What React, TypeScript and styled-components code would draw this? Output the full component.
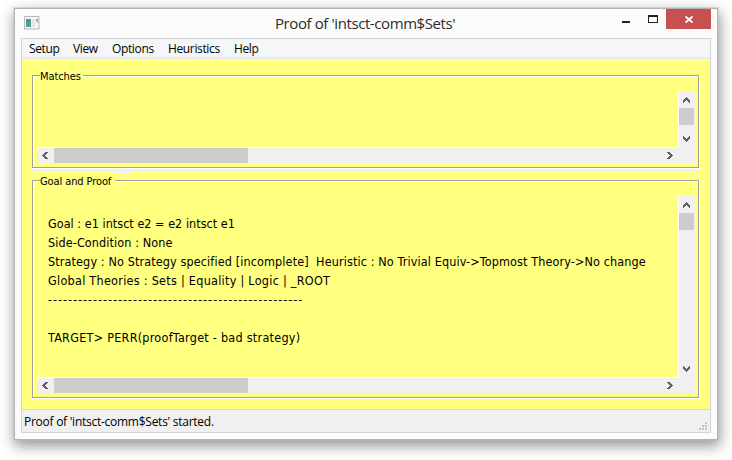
import React from "react";
import styled, { createGlobalStyle } from "styled-components";

const GlobalStyle = createGlobalStyle`
  * { box-sizing: border-box; }
  body { margin: 0; background: #fff; overflow: hidden; }
`;

const Desktop = styled.div`
  width: 732px;
  height: 460px;
  padding: 8px 0 0 14px;
  background: #fff;
`;

const WindowFrame = styled.section`
  width: 704px;
  height: 432px;
  display: flex;
  flex-direction: column;
  padding: 0 6px 6px;
  border: 1px solid #b4b4b4;
  background: #fbfbfb;
  box-shadow: 0 0 0 1px rgba(190, 190, 190, 0.45), 1px 5px 13px 1px rgba(0, 0, 0, 0.42);
`;

const TitleBar = styled.header`
  display: grid;
  grid-template-columns: 245px 1fr auto;
  height: 29px;
`;

const AppIcon = styled.svg`
  display: block;
  margin: 7px 0 0 3px;
`;

const Title = styled.h1`
  margin: 0;
  padding-left: 9px;
  font: 400 15px/29px "Open Sans", "Noto Sans", sans-serif;
  letter-spacing: -0.41px;
  white-space: pre;
  color: #2b2b2b;
`;

const WindowButtons = styled.div`
  display: flex;
  height: 20px;
`;

const WindowButton = styled.button<{ $width: number; $danger?: boolean }>`
  width: ${(p) => p.$width}px;
  height: 20px;
  padding: 0;
  border: 0;
  background: ${(p) => (p.$danger ? "#c75050" : "transparent")};
  svg { display: block; }
`;

const Client = styled.div`
  flex: 1;
  display: flex;
  flex-direction: column;
  border: 1px solid #d2d3d5;
  background: #ffff80;
`;

const MenuBar = styled.nav`
  display: flex;
  height: 20px;
  padding-left: 7px;
  border-bottom: 2px solid #e8e9eb;
  background: #f5f6f7;
`;

const MenuItem = styled.span<{ $width: number }>`
  width: ${(p) => p.$width}px;
  font: 12px/20px "Open Sans", "Noto Sans", sans-serif;
  letter-spacing: -0.36px;
  white-space: pre;
  color: #000;
`;

const Panels = styled.main`
  flex: 1;
  padding: 10px 10px 0;
`;

const Group = styled.section<{ $height: number }>`
  height: ${(p) => p.$height}px;
  width: 667px;
  display: flex;
  flex-direction: column;
`;

/* The legend row draws the etched top edge on both sides of its text. */
const Legend = styled.div`
  display: flex;
  height: 12px;
  &::before,
  &::after {
    content: "";
    margin-top: 6px;
    height: 6px;
    border-top: 1px solid #a0a0a0;
    box-shadow: inset 0 1px #fff;
  }
  &::before {
    width: 7px;
    border-left: 1px solid #a0a0a0;
    box-shadow: inset 1px 1px #fff;
  }
  &::after {
    flex: 1;
    border-right: 1px solid #a0a0a0;
    box-shadow: inset 0 1px #fff, 1px 0 #fff;
  }
`;

const LegendText = styled.span<{ $width: number }>`
  width: ${(p) => p.$width}px;
  font: 11px/15px "DejaVu Sans Condensed", "DejaVu Sans", sans-serif;
  font-stretch: condensed;
  letter-spacing: -0.1px;
  white-space: pre;
  color: #000;
`;

const GroupBody = styled.div`
  flex: 1;
  display: grid;
  grid-template-columns: 641px 17px;
  grid-template-rows: 1fr 17px;
  padding: 10px 3px 3px 4px;
  border: 1px solid #a0a0a0;
  border-top: 0;
  box-shadow: inset 1px 0 #fff, 1px 0 #fff, 1px 1px #fff, 0 1px #fff;
`;

const Content = styled.div`
  min-width: 0;
  padding: 18px 0 0 11px;
  overflow: hidden;
`;

const Line = styled.p<{ $tracking: number }>`
  margin: 0;
  height: 19px;
  font: 12.5px/19px "DejaVu Sans Condensed", "DejaVu Sans", sans-serif;
  font-stretch: condensed;
  letter-spacing: ${(p) => p.$tracking}px;
  white-space: pre;
  color: #000;
`;

const VScroll = styled.div`
  display: flex;
  flex-direction: column;
  width: 17px;
  border-left: 1px solid #fff;
  background: #f0f0f0;
  svg { display: block; flex: none; }
`;

const HScroll = styled.div`
  grid-column: 1 / 3;
  display: flex;
  height: 17px;
  padding-right: 17px;
  background: linear-gradient(90deg, #fff 641px, #f0f0f0 641px) top / 100% 1px no-repeat #f0f0f0;
  svg { display: block; flex: none; margin-top: 1px; }
`;

const Thumb = styled.div<{ $w: number; $h: number }>`
  width: ${(p) => p.$w}px;
  height: ${(p) => p.$h}px;
  flex: none;
  background: #cdcdcd;
`;

const VThumb = styled(Thumb)`
  margin-top: 1px;
`;

const HThumb = styled(Thumb)`
  margin: 1px 0 0 1px;
`;

const Track = styled.div`
  flex: 1;
`;

const Splitter = styled.div`
  width: 668px;
  height: 5px;
  margin-top: 1px;
  border-top: 3px solid #f0f0f0;
  &::after {
    content: "";
    display: block;
    width: 17px;
    height: 2px;
    margin-left: 82px;
    background: #f0f0f0;
  }
`;

const StatusBar = styled.footer`
  display: flex;
  justify-content: space-between;
  height: 23px;
  padding-left: 2px;
  border-top: 1px solid #d7d7d7;
  background: #f0f0f0;
`;

const StatusText = styled.span`
  font: 12px/24px "Open Sans", "Noto Sans", sans-serif;
  letter-spacing: -0.26px;
  white-space: pre;
`;

const Grip = styled.svg`
  display: block;
  margin: 12px 2px 0 0;
`;

type Direction = "up" | "down" | "left" | "right";

const chevrons: Record<Direction, string> = {
  up: "M7 6h1v1h1v1h1v1h1v3h-1v-1h-1v-1h-1v-1h-1v1h-1v1h-1v1h-1v-3h1v-1h1v-1h1z",
  down: "M4 5h1v1h1v1h1v1h1v-1h1v-1h1v-1h1v3h-1v1h-1v1h-1v1h-1v-1h-1v-1h-1v-1h-1z",
  left: "M11 4v1h-1v1h-1v1h-1v1h1v1h1v1h1v1h-3v-1h-1v-1h-1v-1h-1v-1h1v-1h1v-1h1v-1z",
  right: "M5 4h3v1h1v1h1v1h1v1h-1v1h-1v1h-1v1h-3v-1h1v-1h1v-1h1v-1h-1v-1h-1v-1h-1z",
};

const Arrow = ({ dir }: { dir: Direction }) => (
  <svg width="16" height="16" viewBox="0 0 16 16">
    <path d={chevrons[dir]} fill="#606060" />
  </svg>
);

interface ScrollGroupProps {
  title: string;
  titleWidth: number;
  height: number;
  children?: React.ReactNode;
}

const ScrollGroup = ({ title, titleWidth, height, children }: ScrollGroupProps) => (
  <Group $height={height}>
    <Legend>
      <LegendText $width={titleWidth}>{title}</LegendText>
    </Legend>
    <GroupBody>
      <Content>{children}</Content>
      <VScroll>
        <Arrow dir="up" />
        <VThumb $w={15} $h={17} />
        <Track />
        <Arrow dir="down" />
      </VScroll>
      <HScroll>
        <Arrow dir="left" />
        <HThumb $w={194} $h={15} />
        <Track />
        <Arrow dir="right" />
      </HScroll>
    </GroupBody>
  </Group>
);

const menus = [
  { label: "Setup", width: 44 },
  { label: "View", width: 39 },
  { label: "Options", width: 56 },
  { label: "Heuristics", width: 66 },
  { label: "Help", width: 40 },
];

const proofLines = [
  { text: "Goal : e1 intsct e2 = e2 intsct e1", tracking: 0.03 },
  { text: "Side-Condition : None", tracking: 0.1 },
  {
    text: "Strategy : No Strategy specified [incomplete]  Heuristic : No Trivial Equiv->Topmost Theory->No change",
    tracking: 0.122,
  },
  { text: "Global Theories : Sets | Equality | Logic | _ROOT", tracking: 0.275 },
  { text: "---------------------------------------------------", tracking: 0.945 },
  { text: " ", tracking: 0 },
  { text: "TARGET> PERR(proofTarget - bad strategy)", tracking: 0.26 },
];

export default function App() {
  return (
    <Desktop>
      <GlobalStyle />
      <WindowFrame>
        <TitleBar>
          <AppIcon width="16" height="14" viewBox="0 0 16 14">
            <defs>
              <linearGradient id="screen" x1="0" y1="0" x2="0.4" y2="1">
                <stop offset="0" stopColor="#5c86ad" />
                <stop offset="1" stopColor="#4fa58a" />
              </linearGradient>
            </defs>
            <path d="M0.5 0.5H15V13H0.5Z" fill="#f6f6f6" stroke="#b2b8bd" />
            <path d="M2 3H7V11H2Z" fill="url(#screen)" />
            <path d="M8 3H11V11H8Z" fill="#e3e4e4" />
            <path d="M12 3H14V7L12 5Z" fill="#7fb0bb" />
          </AppIcon>
          <Title>Proof of 'intsct-comm$Sets'</Title>
          <WindowButtons>
            <WindowButton $width={26} aria-label="Minimize">
              <svg width="26" height="20"><path d="M7 12H15V14H7Z" fill="#222" /></svg>
            </WindowButton>
            <WindowButton $width={25} aria-label="Maximize">
              <svg width="25" height="20">
                <path d="M7 6H17V14H7ZM8 8V13H16V8Z" fill="#222" fillRule="evenodd" />
              </svg>
            </WindowButton>
            <WindowButton $width={45} $danger aria-label="Close">
              <svg width="45" height="20">
                <path d="M19.5 7.5L26.5 13.5M26.5 7.5L19.5 13.5" stroke="#fff" strokeWidth="1.8" />
              </svg>
            </WindowButton>
          </WindowButtons>
        </TitleBar>
        <Client>
          <MenuBar>
            {menus.map((m) => (
              <MenuItem key={m.label} $width={m.width}>{m.label}</MenuItem>
            ))}
          </MenuBar>
          <Panels>
            <ScrollGroup title="Matches" titleWidth={43} height={99} />
            <Splitter />
            <ScrollGroup title="Goal and Proof" titleWidth={75} height={224}>
              {proofLines.map((l, i) => (
                <Line key={i} $tracking={l.tracking}>{l.text}</Line>
              ))}
            </ScrollGroup>
          </Panels>
          <StatusBar>
            <StatusText>Proof of 'intsct-comm$Sets' started.</StatusText>
            <Grip width="9" height="9" viewBox="0 0 9 9">
              <path d="M6 0h2v2h-2zM3 3h2v2h-2zM6 3h2v2h-2zM0 6h2v2h-2zM3 6h2v2h-2zM6 6h2v2h-2z" fill="#bfbfbf" />
            </Grip>
          </StatusBar>
        </Client>
      </WindowFrame>
    </Desktop>
  );
}
